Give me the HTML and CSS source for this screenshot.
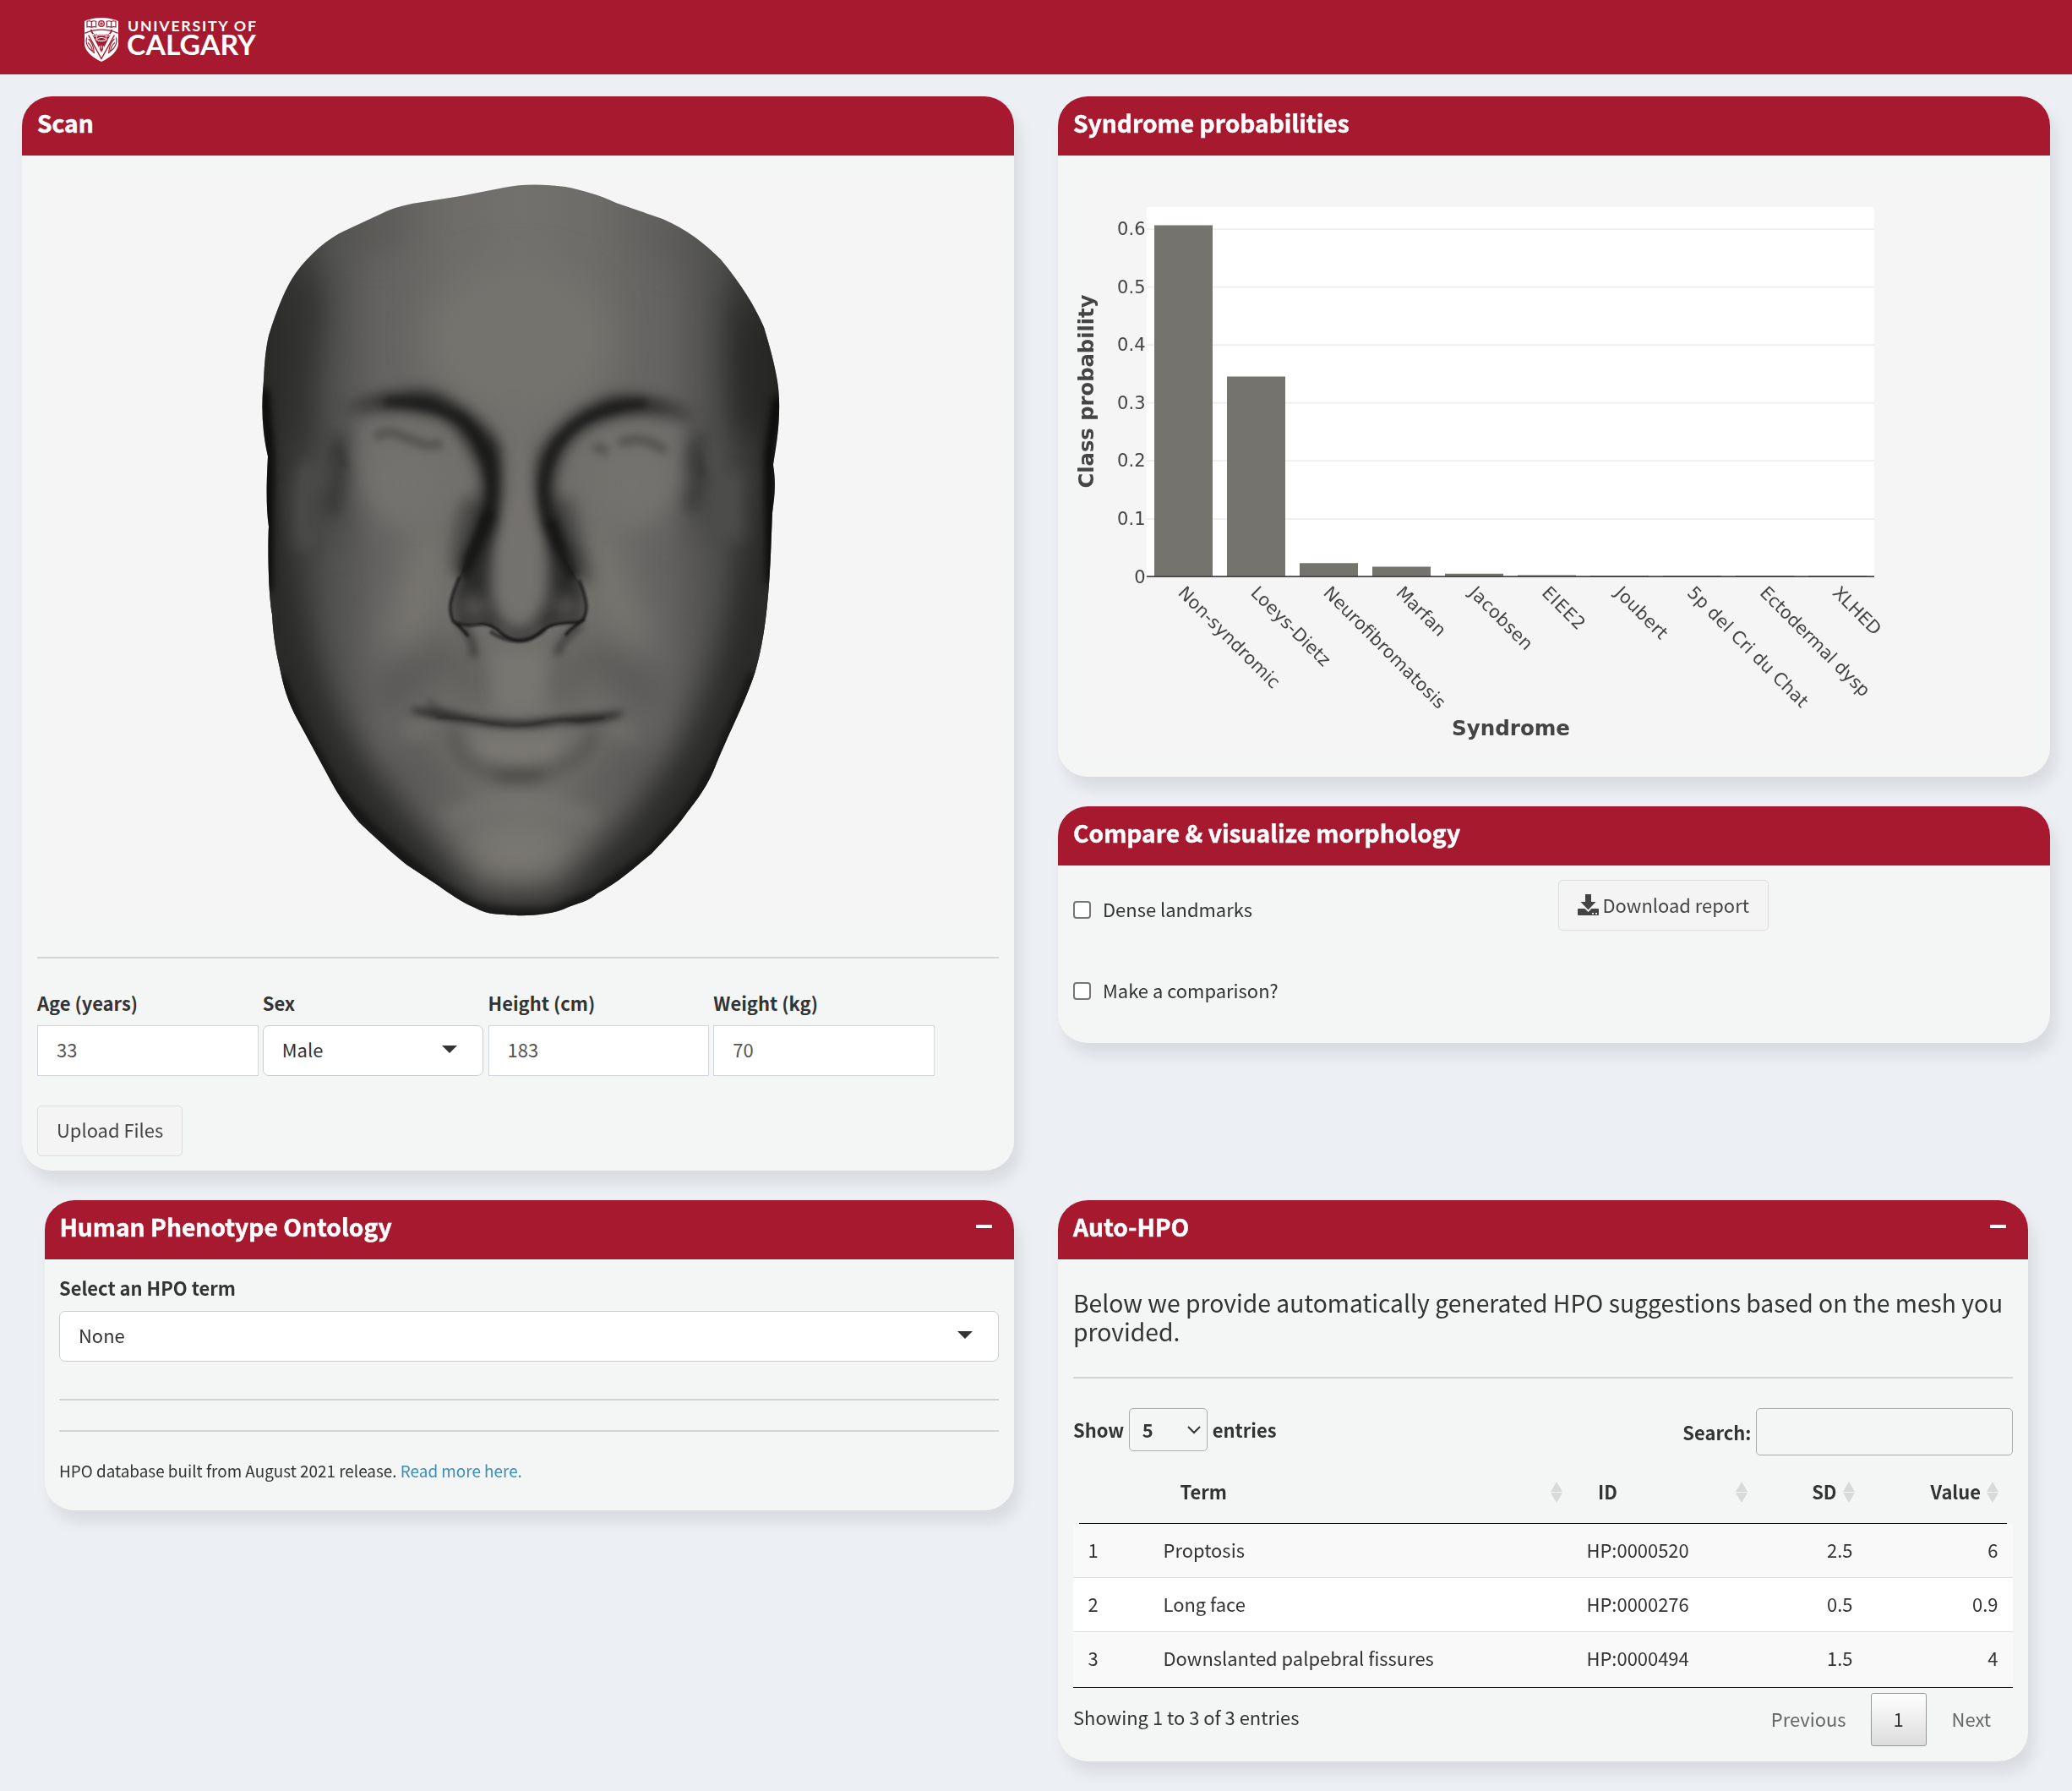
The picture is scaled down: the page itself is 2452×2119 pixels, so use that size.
FILE: index.html
```html
<!DOCTYPE html>
<html lang="en">
<head>
<meta charset="utf-8">
<title>Syndrome classifier</title>
<link rel="stylesheet" href="styles.css">
</head>
<body>
<header class="topbar">
  <svg class="logo" viewBox="0 0 204 54" width="204" height="54" role="img" aria-label="University of Calgary">
    <g transform="scale(.3333)">
      <path d="M0 12Q28 0 60 0T120 12V92Q118 128 60 156Q2 128 0 92Z" fill="#fff"/>
      <g fill="none" stroke="#a6192e" stroke-width="3.5">
        <path d="M9 13q9-4 16 1q7-5 16-1v20q-9-3-16 1q-7-4-16-1zM25 14v20M79 13q9-4 16 1q7-5 16-1v20q-9-3-16 1q-7-4-16-1zM95 14v20"/>
        <circle cx="60" cy="21" r="10"/><path d="M60 11v20M50 16l20 10M50 26l20-10" stroke-width="2.5"/>
        <path d="M1 55Q60 30 119 55" stroke-width="4"/>
        <path d="M24 42q0 17 20 20M96 42q0 17-20 20" stroke-width="5"/>
        <path d="M14 62L60 146L106 62" stroke-width="4"/>
        <path d="M8 70q-6 20 8 38l20 18M14 75q16 14 20 46M12 88q14 12 16 30M112 70q6 20-8 38l-20 18M106 75q-16 14-20 46M108 88q-14 12-16 30"/>
      </g>
      <path d="M27 59h66L60 123Z" fill="#a6192e"/>
      <path d="M43 62q-8-8-15-2q6 8 17 6l-4 12q18 10 38 0l-4-12q11 2 17-6q-7-6-15 2z" fill="#a6192e" stroke="#fff" stroke-width="3"/>
      <path d="M44 76q16-12 32 0M48 82l24 0M53 100v10M60 98v12M67 100v10" stroke="#fff" stroke-width="3" fill="none"/>
    </g>
    <text class="logo-text" x="51" y="16.200" font-size="17.8" textLength="152">UNIVERSITY OF</text>
    <text class="logo-text" x="50" y="43.800" font-size="31.8" textLength="153" lengthAdjust="spacingAndGlyphs">CALGARY</text>
  </svg>
</header>
<main class="page">
  <section class="row">
    <article class="box box-scan">
      <h2 class="box-head">Scan</h2>
      <div class="box-body">
        <svg class="face" viewBox="44 201 1138 896" width="1138" height="896">
          <defs>
            <clipPath id="head"><path id="outline" d="M596 222C620 217 645 218 669 221C690 225 710 231 729 240L784 259C812 271 833 287 853 307C878 337 893 362 904 387C917 430 922 455 922 473C923 505 918 530 915 550C919 575 916 590 914 607L912 657C909 720 904 760 893 797C880 835 868 855 848 903C838 930 822 950 814 960C800 980 785 995 771 1010C750 1027 732 1044 707 1057C697 1066 684 1069 673 1073C650 1085 610 1084 596 1082C578 1082 570 1078 562 1074C545 1067 532 1057 519 1048L481 1023C460 1006 440 987 425 973C410 955 400 940 391 923L353 853C340 830 335 810 331 790C325 765 323 745 322 727C317 700 317 640 318 623C314 595 316 560 317 540C310 510 309 480 312 450C313 425 315 410 318 397C328 365 338 340 350 323C367 300 388 282 408 273L451 253C465 246 480 242 494 240L545 232Z"/></clipPath>
            <clipPath id="nose"><path d="M540 460H690L660 523Q643 550 643 583Q648 620 660 647L688 693Q698 722 692 733L677 738C652 736 645 748 635 752Q615 766 592 750Q575 734 553 740L536 735C530 722 533 710 536 703L553 657Q580 615 581 567Q572 520 540 500Z"/></clipPath>
            <linearGradient id="skin" gradientUnits="userSpaceOnUse" x1="310" y1="0" x2="925" y2="0">
              <stop offset="0" stop-color="#242423"/><stop offset=".06" stop-color="#3a3a38"/><stop offset=".13" stop-color="#50504e"/><stop offset=".22" stop-color="#636260"/><stop offset=".36" stop-color="#6d6c68"/><stop offset=".5" stop-color="#72716d"/><stop offset=".64" stop-color="#6d6c68"/><stop offset=".78" stop-color="#636260"/><stop offset=".88" stop-color="#4e4e4c"/><stop offset=".95" stop-color="#343432"/><stop offset="1" stop-color="#20201f"/>
            </linearGradient>
            <filter id="b2" x="-50%" y="-50%" width="200%" height="200%" color-interpolation-filters="sRGB"><feGaussianBlur stdDeviation="1.6"/></filter>
            <filter id="b5" x="-50%" y="-100%" width="200%" height="300%" color-interpolation-filters="sRGB"><feGaussianBlur stdDeviation="5"/></filter>
            <filter id="b9" x="-60%" y="-100%" width="220%" height="300%" color-interpolation-filters="sRGB"><feGaussianBlur stdDeviation="9"/></filter>
            <filter id="b18" x="-60%" y="-60%" width="220%" height="220%" color-interpolation-filters="sRGB"><feGaussianBlur stdDeviation="20"/></filter>
          </defs>
          <g clip-path="url(#head)">
            <rect x="300" y="200" width="640" height="900" fill="url(#skin)"/>
            <g filter="url(#b18)">
              <path d="M290 640H325L345 700Q374 810 428 890L490 965L570 1054L655 1054L742 965L805 880Q865 770 888 640H960V1120H280Z" fill="#2a2a29"/>
              <path d="M345 320Q390 300 378 400Q360 465 372 520L330 540L300 420Z" fill="#2c2c2a" opacity=".75"/>
              <path d="M868 330Q855 430 872 520L920 510V400Z" fill="#242422" opacity=".8"/>
              <path d="M390 280Q420 250 500 245L450 300ZM730 245L850 300L800 310Z" fill="#53524f" opacity=".7"/>
              <ellipse cx="613" cy="400" rx="110" ry="90" fill="#74736e"/>
              <ellipse cx="613" cy="1012" rx="62" ry="34" fill="#7a7872"/>
              <ellipse cx="478" cy="570" rx="48" ry="50" fill="#777670"/>
              <ellipse cx="753" cy="570" rx="48" ry="50" fill="#777670"/>
              <path d="M500 610Q480 690 450 770L490 760Q530 710 525 640ZM715 610Q740 690 775 770L735 760Q700 710 700 640Z" fill="#7a7872"/>
              <path d="M392 560Q408 600 390 640M835 560Q820 600 840 640" stroke="#3a3a38" stroke-width="22" fill="none" opacity=".6"/>
              <path d="M540 770Q490 790 450 830M560 780V830M690 770Q735 790 775 830M668 780V830M480 880L505 920L545 950M755 880L725 920L685 950" stroke="#454543" stroke-width="26" fill="none" opacity=".6"/>
            </g>
            <g filter="url(#b9)">
              <path d="M405 486Q450 462 510 463Q562 484 593 528Q603 580 590 622L563 672H544Q578 600 570 560Q552 510 522 492Q470 476 405 486ZM828 496Q770 462 720 471Q665 492 640 535Q628 580 642 622L668 672H690Q650 610 655 570Q660 525 695 504Q750 475 828 496Z" fill="#141413" opacity=".9"/>
              <path d="M562 590Q545 630 546 680M664 590Q678 640 690 690" stroke="#30302e" stroke-width="24" fill="none" opacity=".6"/>
              <path d="M404 515Q393 535 402 560L392 610M832 515Q812 540 827 565L818 605" stroke="#282827" stroke-width="16" fill="none" opacity=".65"/>
              <path d="M538 860Q532 888 562 908Q613 928 664 908Q706 889 700 860" stroke="#4c4b48" stroke-width="16" fill="none" opacity=".65"/>
              <path d="M585 917Q613 921 643 917" stroke="#3a3936" stroke-width="12" fill="none" opacity=".85"/>
              <path d="M530 967Q613 932 700 970" stroke="#777570" stroke-width="12" fill="none" opacity=".9"/>
              <path d="M580 770H647L642 840H586Z" fill="#777671"/>
              <path d="M562 867Q613 876 665 867L655 897Q613 909 571 897Z" fill="#7a7872"/>
              <path d="M425 500Q480 480 530 505Q560 540 555 580Q520 640 470 620Q420 570 425 500ZM806 505Q745 483 700 510Q670 540 680 580Q720 640 760 620Q810 570 806 505Z" fill="#73726d" opacity=".75"/>
              <path d="M480 868L505 860M725 860L750 872" stroke="#7a7872" stroke-width="14" opacity=".7"/>
              <path d="M365 550Q352 590 360 650M872 560Q862 590 870 640" stroke="#5c5b59" stroke-width="18" fill="none" opacity=".5"/>
            </g>
            <g filter="url(#b5)">
              <path d="M455 476Q510 474 550 499Q577 530 582 575Q582 620 553 665M663 652Q643 615 643 575Q647 525 690 497Q725 479 765 477" stroke="#161615" stroke-width="9" fill="none" opacity=".75"/>
              <path d="M443 517Q461 507 478 517L505 527L524 525M702 528L719 534M733 525Q760 512 788 534" stroke="#484846" stroke-width="11" fill="none" opacity=".7"/>
              <path d="M545 738Q560 752 561 778M688 740Q664 755 659 775" stroke="#242423" stroke-width="8" fill="none" opacity=".65"/>
              <path d="M487 840Q520 842 558 850Q613 860 665 850Q704 848 737 844Q704 857 665 853Q613 864 558 853Q520 850 487 840Z" fill="#111" stroke="#20201f" stroke-width="4"/>
              <path d="M506 828Q515 842 545 846" stroke="#3a3a38" stroke-width="8" fill="none" opacity=".6"/>
              <path d="M402 530L408 555M828 535L832 565" stroke="#2e2e2c" stroke-width="8" opacity=".55"/>
              <path d="M313 460L319 540L317 700M920 470L910 540L912 690" stroke="#050505" stroke-width="9" fill="none"/>
              <path d="M331 800L353 853L391 923Q430 980 519 1048L562 1074L600 1081H650L707 1057L771 1010L814 960L848 903L893 797" stroke="#0c0c0c" stroke-width="12" fill="none" opacity=".7"/>
            </g>
            <g clip-path="url(#nose)">
              <g filter="url(#b9)">
                <path d="M581 600L548 665L534 710L540 744L585 745L614 762L646 745L690 740L692 700L650 610V700Q640 744 614 746Q586 744 580 700Z" fill="#2a2a29"/>
                <path d="M548 710Q558 695 570 710L580 730Q554 736 545 722ZM655 728Q660 693 680 709L684 724Q668 734 655 728Z" fill="#565552"/>
                <path d="M604 450Q618 590 640 680Q642 728 614 730Q588 728 587 685Q608 580 600 450Z" fill="#74726e"/>
              </g>
            </g>
            <g filter="url(#b5)" fill="none" stroke="#131312">
              <path d="M580 605Q562 650 548 682M652 615Q662 655 680 684" stroke-width="12" opacity=".85"/>
            </g>
            <g filter="url(#b2)" fill="none" stroke="#111">
              <path d="M544 682Q538 695 535 706Q530 720 536 735Q549 742 565 739Q580 736 592 748Q615 767 635 752Q647 739 662 738L684 736Q694 734 694 716Q692 700 685 686" stroke-width="3" opacity=".9"/>
              <path d="M536 735Q549 745 554 753M692 733Q674 744 669 752" stroke-width="3"/>
              <path d="M580 747Q613 770 645 745" stroke-width="5" opacity=".6"/>
              <path d="M516 849Q560 850 570 854Q613 862 640 855Q665 849 684 853L715 849" stroke-width="3" opacity=".35"/>
            </g>
          </g>
        </svg>
        <hr class="rule">
        <form class="fields">
          <label class="field">Age (years)<input class="input" value="33"></label>
          <div class="field">Sex<div class="select">Male<i class="caret"></i></div></div>
          <label class="field">Height (cm)<input class="input" value="183"></label>
          <label class="field">Weight (kg)<input class="input" value="70"></label>
        </form>
        <button class="btn btn-upload">Upload Files</button>
      </div>
    </article>
    <div class="stack">
      <article class="box box-chart">
        <h2 class="box-head">Syndrome probabilities</h2>
        <div class="box-body">
          <svg class="chart" viewBox="1270 201 1138 700" width="1138" height="700">
            <rect x="1357" y="245" width="861" height="437" fill="#fff"/>
            <path d="M1357 271H2218M1357 339.5H2218M1357 408H2218M1357 476.5H2218M1357 545H2218M1357 614H2218" stroke="#eee" stroke-width="1.75"/>
            <path d="M1366 266.5h69V682h-69zM1452 445.5h69V682h-69zM1538 666.3h69V682h-69zM1624 670.5h69V682h-69zM1710 678.7h69V682h-69zM1796 680.5h69V682h-69zM1882 680.9h69V682h-69zM1968 680.9h69V682h-69zM2054 680.9h69V682h-69zM2140 680.9h69V682h-69z" fill="#74736e"/>
            <path d="M1357 682H2218" stroke="#444" stroke-width="1.75"/>
            <g class="ticks" text-anchor="end">
              <text x="1355.500" y="278">0.6</text><text x="1355.500" y="346.500">0.5</text><text x="1355.500" y="415">0.4</text><text x="1355.500" y="483.500">0.3</text><text x="1355.500" y="552">0.2</text><text x="1355.500" y="620.500">0.1</text><text x="1355.500" y="690">0</text>
            </g>
            <g class="ticks">
              <text transform="translate(1393 702.500) rotate(45)" textLength="160">Non-syndromic</text>
              <text transform="translate(1479 702.500) rotate(45)" textLength="123">Loeys-Dietz</text>
              <text transform="translate(1565 702.500) rotate(45)" textLength="194">Neurofibromatosis</text>
              <text transform="translate(1651 702.500) rotate(45)" textLength="73">Marfan</text>
              <text transform="translate(1737.500 702.500) rotate(45)" textLength="96">Jacobsen</text>
              <text transform="translate(1823.500 702.500) rotate(45)" textLength="62">EIEE2</text>
              <text transform="translate(1910 702.500) rotate(45)" textLength="78">Joubert</text>
              <text transform="translate(1995.500 702.500) rotate(45)" textLength="192">5p del Cri du Chat</text>
              <text transform="translate(2081.500 702.500) rotate(45)" textLength="174">Ectodermal dysp</text>
              <text transform="translate(2167.500 702.500) rotate(45)" textLength="71">XLHED</text>
            </g>
            <text class="axis-title" x="1718" y="869.500" textLength="140" lengthAdjust="spacingAndGlyphs">Syndrome</text>
            <text class="axis-title" transform="translate(1294 577.500) rotate(-90)" textLength="229" lengthAdjust="spacingAndGlyphs">Class probability</text>
          </svg>
        </div>
      </article>
      <article class="box box-compare">
        <h2 class="box-head">Compare &amp; visualize morphology</h2>
        <div class="box-body compare">
          <div class="checks">
            <label class="check"><i class="tick-box"></i>Dense landmarks</label>
            <label class="check"><i class="tick-box"></i>Make a comparison?</label>
          </div>
          <button class="btn btn-download"><svg class="icon-download" viewBox="0 0 25 25" width="25" height="25"><path d="M9 0h7v9h5.500L12.500 18.500 3.500 9H9zM1 17h7.500l4 4 4-4H24q1 0 1 1v6q0 1-1 1H1q-1 0-1-1v-6q0-1 1-1zM17 22v1.700h2V22zM21 22v1.700h2V22z" fill="#444" fill-rule="evenodd"/></svg>Download report</button>
        </div>
      </article>
    </div>
  </section>
  <section class="row row-lower">
    <article class="box box-hpo">
      <h2 class="box-head">Human Phenotype Ontology<i class="minus"></i></h2>
      <div class="box-body">
        <div class="hpo-label">Select an HPO term</div>
        <div class="select select-hpo">None<i class="caret"></i></div>
        <hr class="rule rule-first">
        <hr class="rule">
        <p class="note">HPO database built from August 2021 release. <a href="#">Read more here.</a></p>
      </div>
    </article>
    <article class="box box-auto">
      <h2 class="box-head">Auto-HPO<i class="minus"></i></h2>
      <div class="box-body">
        <p class="lead">Below we provide automatically generated HPO suggestions based on the mesh you<br>provided.</p>
        <hr class="rule">
        <div class="controls">
          <div class="length">Show <span class="length-select">5<svg viewBox="0 0 16 10" width="16" height="10"><path d="M1 1l7 7 7-7" fill="none" stroke="#333" stroke-width="2"/></svg></span> entries</div>
          <label class="search">Search:<input class="search-input"></label>
        </div>
        <div class="thead">
          <span></span>
          <span class="th">Term<i class="sort"></i></span>
          <span class="th">ID<i class="sort"></i></span>
          <span class="th th-num">SD<i class="sort"></i></span>
          <span class="th th-num">Value<i class="sort"></i></span>
        </div>
        <div class="tbody">
          <div class="tr odd"><span>1</span><span>Proptosis</span><span>HP:0000520</span><span class="num">2.5</span><span class="num">6</span></div>
          <div class="tr"><span>2</span><span>Long face</span><span>HP:0000276</span><span class="num">0.5</span><span class="num">0.9</span></div>
          <div class="tr odd"><span>3</span><span>Downslanted palpebral fissures</span><span>HP:0000494</span><span class="num">1.5</span><span class="num">4</span></div>
        </div>
        <div class="tfoot">
          <span class="info">Showing 1 to 3 of 3 entries</span>
          <nav class="pager"><span class="prev">Previous</span><b class="current">1</b><span>Next</span></nav>
        </div>
      </div>
    </article>
  </section>
</main>
</body>
</html>
```
FILE: styles.css
```css
* { box-sizing: border-box; }
body {
  margin: 0;
  height: 2119px;
  overflow: hidden;
  background: #ecf0f5;
  color: #333;
  font: 21.94px/35px "Noto Sans CJK SC", "Open Sans", sans-serif;
}
h2, p { margin: 0; font-weight: 400; }
input, button { font: inherit; }

.topbar { height: 88px; padding: 21px 0 0 100px; background: #a6192e; }
.logo { display: block; overflow: visible; }
.logo-text { font-family: Lato, sans-serif; font-weight: 700; fill: #fff; }

.page { padding: 26px; }
.row { display: flex; justify-content: space-between; height: 1306px; align-items: flex-start; }
.row-lower { height: auto; padding: 0 26px 0 27px; }
.stack { display: flex; flex-direction: column; gap: 35px; }

.box {
  width: 1174px;
  border-radius: 35px;
  background: #f4f6f5;
  box-shadow: 7px 14px 17.500px rgba(0, 0, 0, .085);
}
.box-scan { height: 1271px; }
.box-chart { height: 805px; }
.box-compare { height: 280px; }
.box-hpo { width: 1147px; height: 367px; }
.box-auto { width: 1148px; height: 663.500px; }
.box-head {
  display: flex;
  justify-content: space-between;
  height: 70px;
  padding: 13px 26px 0 18px;
  border-radius: 35px 35px 0 0;
  background: #a6192e;
  color: #fff;
  font-size: 28.2px;
  font-weight: 700;
  -webkit-text-stroke: .5px #fff;
}
.box-hpo .box-head { padding-left: 17.500px; }
.box-body { padding: 17px 18px 0; }
.box-hpo .box-body { padding-left: 17px; }
.minus { width: 19px; height: 4px; margin-top: 16px; background: #fff; }

.face, .chart { display: block; background: #f5f5f5; }
.rule { height: 2px; margin: 35px 0; border: 0; background: #d2d4d3; }

.fields { display: flex; gap: 5.200px; }
.field { width: 261.600px; font-weight: 700; }
.input, .select {
  display: flex;
  width: 100%;
  height: 60px;
  margin-top: 9px;
  padding: 0 22px 3px;
  border: 1.500px solid #d2d6de;
  border-radius: 0;
  background: #fff;
  color: #555;
  font-weight: 400;
}
.input { display: block; }
.select {
  justify-content: space-between;
  align-items: center;
  padding-right: 30px;
  border-color: #ccc;
  border-radius: 7px;
  color: #333;
}
.caret { border: 9px solid transparent; border-top: 9px solid #333; border-bottom: 0; }

.btn {
  display: flex;
  align-items: center;
  height: 60px;
  padding: 0 22px 3px;
  border: 1.500px solid #ddd;
  border-radius: 5px;
  background: #f4f4f4;
  color: #444;
  white-space: nowrap;
}
.btn-upload { margin-top: 35px; }
.btn-download { padding-bottom: 2px; }
.icon-download { margin: 0 5px 0 0; }

.chart .ticks { font: 21px "DejaVu Sans", sans-serif; fill: #444; }
.axis-title { font: bold 24.5px "DejaVu Sans", sans-serif; fill: #444; }

.compare { display: flex; align-items: flex-start; }
.checks { display: flex; flex-direction: column; gap: 61px; width: 573.500px; padding-top: 17px; }
.check { display: flex; align-items: center; gap: 14px; }
.tick-box { width: 21px; height: 21px; margin-top: 2px; border: 2px solid #767676; border-radius: 4px; background: #fff; }

.hpo-label { margin-top: -1px; font-weight: 700; }
.select-hpo { margin-top: 10px; }
.rule-first { margin-top: 44px; }
.note { margin-top: -7px; font-size: 18.900px; }
.note a { color: #3c8dbc; text-decoration: none; }

.lead { margin: 17px -10px 37px 0; font-size: 28.300px; line-height: 34px; }
.controls { display: flex; justify-content: space-between; height: 65px; font-weight: 700; }
.length, .search { display: flex; align-items: center; gap: 5.500px; }
.length { height: 51px; }
.search { height: 56px; }
.length-select {
  display: flex;
  align-items: center;
  justify-content: space-between;
  width: 93.500px;
  height: 51px;
  padding: 0 7px 0 15px;
  border: 1.500px solid #aaa;
  border-radius: 5px;
}
.search-input { width: 304px; height: 56px; border: 1.500px solid #aaa; border-radius: 5px; background: transparent; }

.thead {
  display: grid;
  grid-template-columns: 88px 494.500px 219.500px 126.500px 1fr;
  height: 72px;
  margin: 0 7px;
  padding-top: 16px;
  border-bottom: 1px solid #111;
  font-weight: 700;
}
.th { display: flex; justify-content: space-between; padding: 0 11px 0 31.500px; }
.th-num { justify-content: flex-end; gap: 7px; }
.th:last-child { padding-right: 10px; }
.sort { width: 14px; height: 26px; margin-top: 6px; }
.sort::before, .sort::after { content: ""; display: block; border: 7px solid transparent; }
.sort::before { border-top: 0; border-bottom: 12px solid #d8d9d9; }
.sort::after { margin-top: 1px; border-bottom: 0; border-top: 12px solid #d8d9d9; }

.tr {
  display: grid;
  grid-template-columns: 89px 501px 218px 132px 1fr;
  height: 64px;
  background: #fff;
  line-height: 61px;
}
.tr:first-child { height: 63px; }
.tr:last-child { height: 66px; line-height: 62px; }
.tr.odd { background: #f9f9f9; }
.tr + .tr { border-top: 1px solid #ddd; }
.tr span { padding: 0 17.500px; }
.tr .num { text-align: right; }
.tbody { border-bottom: 1px solid #111; }
.tfoot { display: flex; justify-content: space-between; padding-top: 6px; }
.info { padding-top: 11px; }
.pager { display: flex; align-items: center; height: 63px; color: #666; }
.pager span { padding: 0 26px 2px 30px; }
.pager .prev { padding-right: 29px; }
.pager .current {
  width: 66px;
  height: 63px;
  border: 1.500px solid #979797;
  border-radius: 3px;
  background: linear-gradient(#fff, #dcdcdc);
  color: #333;
  font-weight: 400;
  line-height: 59px;
  text-align: center;
}
```
